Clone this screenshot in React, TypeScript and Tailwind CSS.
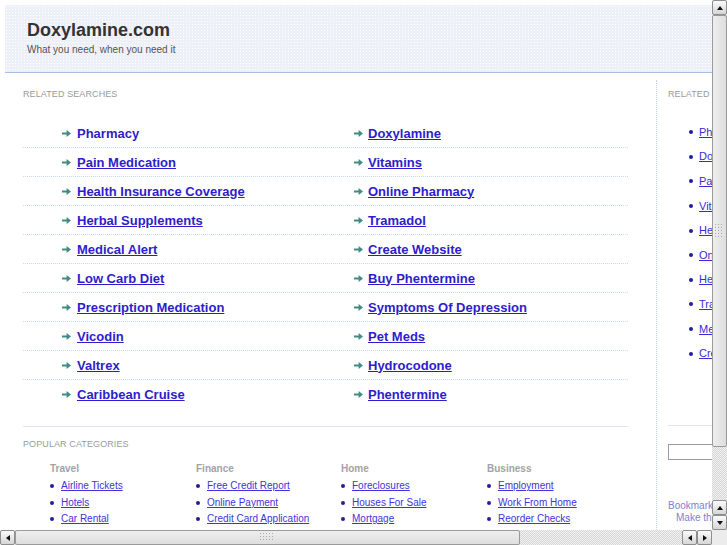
import React from 'react';

const related: [string, string][] = [
  ['Pharmacy', 'Doxylamine'],
  ['Pain Medication', 'Vitamins'],
  ['Health Insurance Coverage', 'Online Pharmacy'],
  ['Herbal Supplements', 'Tramadol'],
  ['Medical Alert', 'Create Website'],
  ['Low Carb Diet', 'Buy Phentermine'],
  ['Prescription Medication', 'Symptoms Of Depression'],
  ['Vicodin', 'Pet Meds'],
  ['Valtrex', 'Hydrocodone'],
  ['Caribbean Cruise', 'Phentermine'],
];

const sideLinks = [
  'Pharmacy', 'Doxylamine', 'Pain Medication', 'Vitamins', 'Health Insurance Coverage',
  'Online Pharmacy', 'Herbal Supplements', 'Tramadol', 'Medical Alert', 'Create Website',
];

const categories = [
  { title: 'Travel', links: ['Airline Tickets', 'Hotels', 'Car Rental'] },
  { title: 'Finance', links: ['Free Credit Report', 'Online Payment', 'Credit Card Application'] },
  { title: 'Home', links: ['Foreclosures', 'Houses For Sale', 'Mortgage'] },
  { title: 'Business', links: ['Employment', 'Work From Home', 'Reorder Checks'] },
];

function Arrow() {
  return (
    <svg width="9" height="7" viewBox="0 0 9 7" className="shrink-0">
      <path d="M0 2.4h4.6V0L9 3.5 4.6 7V4.6H0z" fill="#3f8c84" />
    </svg>
  );
}

function Dot() {
  return <span className="w-[4px] h-[4px] rounded-full bg-[#1f1f9e] shrink-0" />;
}

function Tri({ dir }: { dir: 'up' | 'down' | 'left' | 'right' }) {
  const pts = {
    up: '1,6 4,2 7,6',
    down: '1,2 4,6 7,2',
    left: '6,1 2,4 6,7',
    right: '2,1 6,4 2,7',
  }[dir];
  return (
    <svg width="8" height="8" viewBox="0 0 8 8">
      <polygon points={pts} fill="#111" />
    </svg>
  );
}

function SbButton({ dir }: { dir: 'up' | 'down' | 'left' | 'right' }) {
  return (
    <div className="w-[15px] h-[15px] shrink-0 flex items-center justify-center border border-[#8e8e8e] rounded-[2px] bg-gradient-to-b from-[#fbfbfb] to-[#d6d6d6]">
      <Tri dir={dir} />
    </div>
  );
}

function Grip({ vertical }: { vertical?: boolean }) {
  const cols = vertical ? 3 : 5;
  const rows = vertical ? 5 : 3;
  const dots = [];
  for (let r = 0; r < rows; r++)
    for (let c = 0; c < cols; c++) dots.push(<rect key={`${r}-${c}`} x={c * 3} y={r * 3} width="1" height="1" fill="#a8a8a8" />);
  return (
    <svg width={cols * 3} height={rows * 3}>
      {dots}
    </svg>
  );
}

const checker = 'bg-[repeating-conic-gradient(#d6d6d6_0_25%,#f2f2f2_0_50%)] bg-size-[2px_2px]';

export default function App() {
  return (
    <div className="w-[727px] h-[545px] flex flex-col overflow-hidden bg-white font-['Liberation_Sans',Arial,sans-serif]">
      <div className="flex flex-1 min-h-0">
        {/* page */}
        <div className="flex-1 min-w-0 overflow-hidden p-[5px] pb-0">
          <div className="w-[900px]">
            <header className="h-[68px] border-b border-[#a9bde6] bg-[#eef0f7] bg-[radial-gradient(circle,#ffffff_0.5px,transparent_0.8px)] bg-size-[3px_3px] pt-[14px] pl-[22px]">
              <h1 className="text-[18px] leading-[22px] font-bold text-[#333]">Doxylamine.com</h1>
              <p className="text-[10px] leading-[12px] mt-[3px] text-[#555]">What you need, when you need it</p>
            </header>

            <div className="flex pt-[7px]">
              {/* main column */}
              <div className="w-[651px] pl-[18px] pr-[28px] pt-[9px]">
                <h2 className="text-[9px] leading-[11px] tracking-[0.1px] text-[#9a9a9a]">RELATED SEARCHES</h2>
                <ul className="mt-[19px]">
                  {related.map(([a, b], i) => (
                    <li
                      key={a}
                      className={`h-[29px] flex items-center pl-[39px] ${i < related.length - 1 ? 'border-b border-dotted border-[#cbdaf2]' : ''}`}
                    >
                      <div className="w-[292px] flex items-center gap-[6px]">
                        <Arrow />
                        <a className={`text-[13px] leading-[15px] font-bold text-[#2e1ccc] ${i === 0 ? '' : 'underline'}`}>{a}</a>
                      </div>
                      <div className="flex items-center gap-[5px]">
                        <Arrow />
                        <a className="text-[13px] leading-[15px] font-bold text-[#2e1ccc] underline">{b}</a>
                      </div>
                    </li>
                  ))}
                </ul>

                <div className="mt-[17px] border-t border-[#e2e6f1] pt-[12px]">
                  <h2 className="text-[9px] leading-[11px] tracking-[0.1px] text-[#9a9a9a]">POPULAR CATEGORIES</h2>
                  <div className="grid grid-cols-[146px_145px_146px_145px] pl-[27px] mt-[13px]">
                    {categories.map((c) => (
                      <div key={c.title}>
                        <h3 className="text-[10px] leading-[12px] font-bold text-[#a3a3a3]">{c.title}</h3>
                        <ul className="mt-[3px]">
                          {c.links.map((l) => (
                            <li key={l} className="flex items-center gap-[7px] h-[16.4px]">
                              <Dot />
                              <a className="text-[10px] leading-[12px] text-[#4232dc] underline">{l}</a>
                            </li>
                          ))}
                        </ul>
                      </div>
                    ))}
                  </div>
                </div>
              </div>

              {/* side column */}
              <aside className="w-[220px] border-l border-dotted border-[#c4d2ee] pl-[11px] pt-[9px] h-[460px]">
                <h2 className="text-[9px] leading-[11px] tracking-[0.1px] text-[#9a9a9a]">RELATED SEARCHES</h2>
                <ul className="mt-[20px] pl-[21px]">
                  {sideLinks.map((l) => (
                    <li key={l} className="flex items-center gap-[6px] h-[24.6px]">
                      <Dot />
                      <a className="text-[11px] leading-[13px] text-[#3a2ad4] underline whitespace-nowrap">{l}</a>
                    </li>
                  ))}
                </ul>
                <div className="mt-[59px] border-t border-[#e2e6f1] pt-[14px]">
                  <input className="w-[150px] h-[16px] border border-[#9c9c9c] bg-white" />
                </div>
                <div className="mt-[36px] text-[10px] leading-[12px] text-[#8080d4]">
                  <p>Bookmark this Page</p>
                  <p className="pl-[8px]">Make this Homepage</p>
                </div>
              </aside>
            </div>
          </div>
        </div>

        {/* vertical scrollbar */}
        <div className={`w-[15px] flex flex-col ${checker}`}>
          <SbButton dir="up" />
          <div className="h-[432px] border border-[#9a9a9a] rounded-[2px] bg-gradient-to-r from-[#eeeeee] to-[#dedede] flex items-center justify-center">
            <Grip vertical />
          </div>
          <div className="flex-1" />
          <SbButton dir="up" />
          <SbButton dir="down" />
        </div>
      </div>

      {/* horizontal scrollbar */}
      <div className="h-[15px] flex">
        <div className={`flex-1 flex ${checker}`}>
          <SbButton dir="left" />
          <div className="w-[505px] border border-[#9a9a9a] rounded-[2px] bg-gradient-to-b from-[#eeeeee] to-[#dedede] flex items-center justify-center">
            <Grip />
          </div>
          <div className="flex-1" />
          <SbButton dir="left" />
          <SbButton dir="right" />
        </div>
        <div className="w-[15px] bg-[#ececec]" />
      </div>
    </div>
  );
}
